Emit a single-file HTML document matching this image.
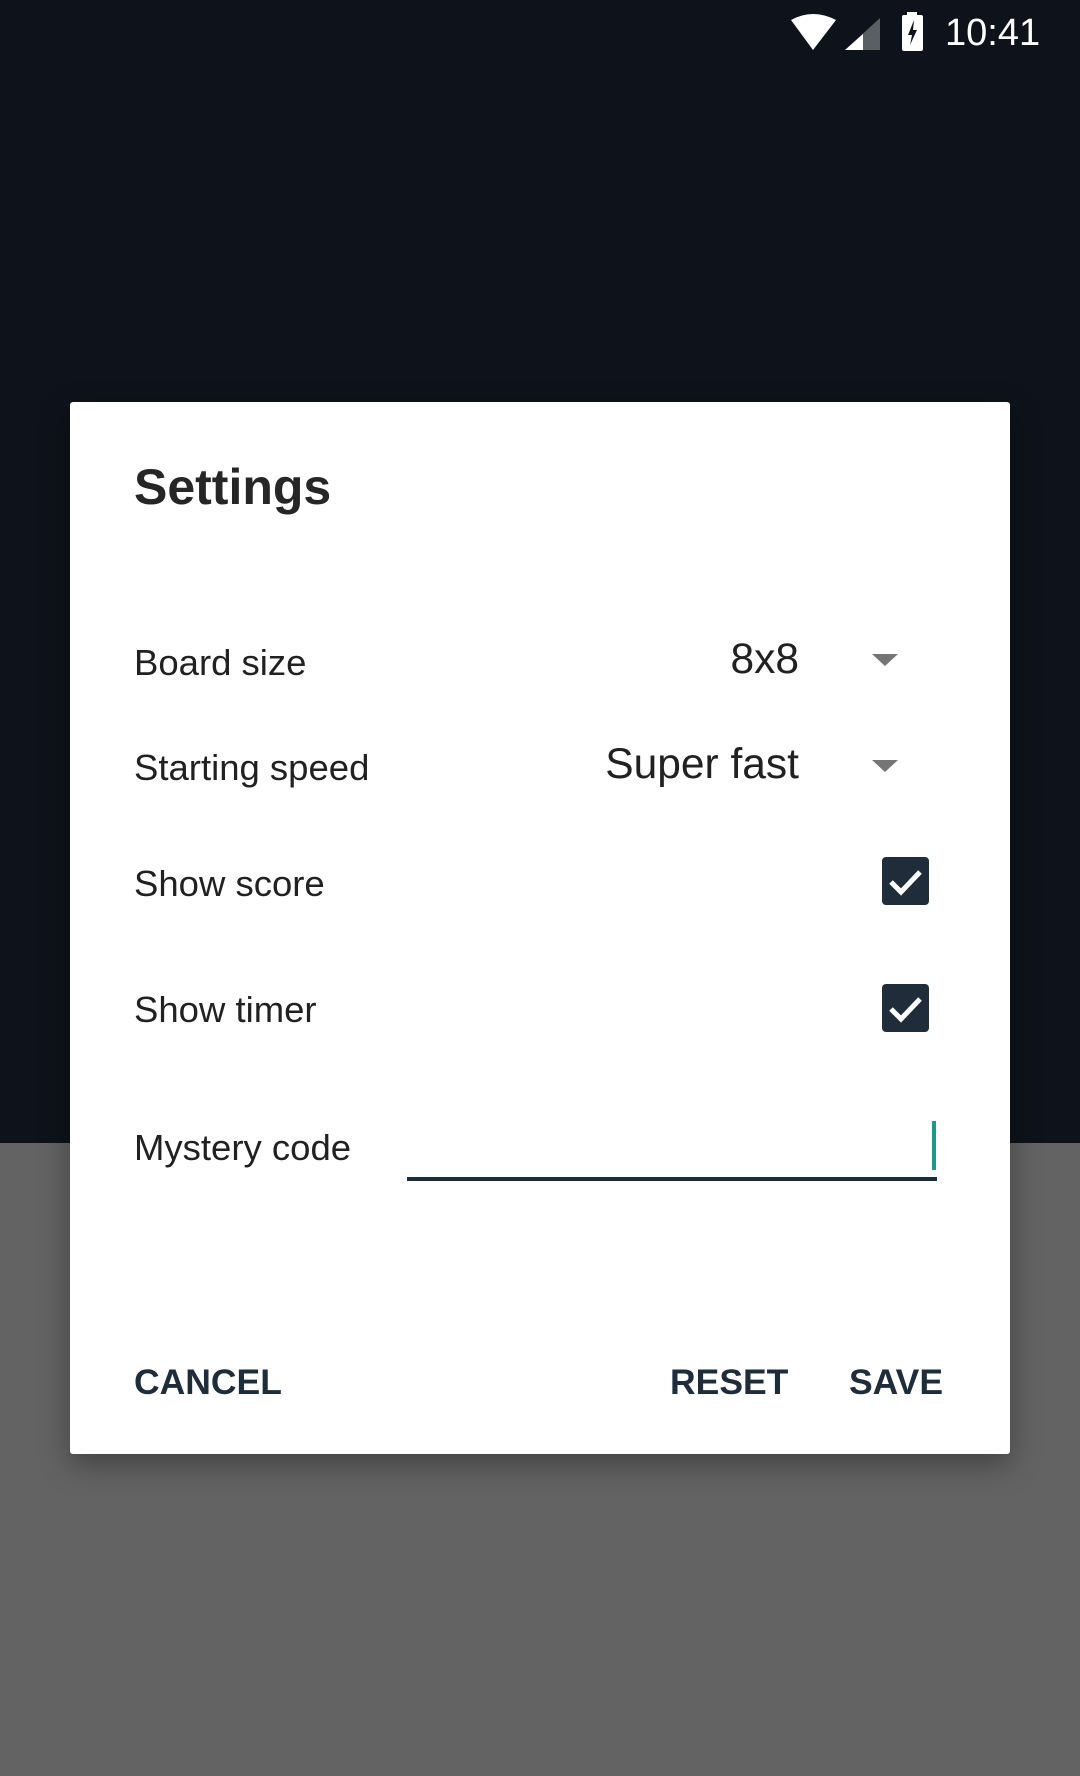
<!DOCTYPE html>
<html><head><style>
*{margin:0;padding:0;box-sizing:border-box}
body{width:1080px;height:1776px;position:relative;overflow:hidden;font-family:"Liberation Sans",sans-serif;background:#636363}
.top{position:absolute;left:0;top:0;width:1080px;height:1143px;background:#0e121a}
.dlg{position:absolute;left:70px;top:402px;width:940px;height:1052px;background:#fff;border-radius:3px;box-shadow:0 10px 30px rgba(0,0,0,.35)}
.t{position:absolute;white-space:nowrap;color:#212121}
.lab{font-size:36.5px}
.val{font-size:42.5px;text-align:right}
.btn{font-size:35.5px;font-weight:bold;color:#1f2d3b}
.arr{position:absolute;width:0;height:0;border-left:13px solid transparent;border-right:13px solid transparent;border-top:12px solid #757575}
.cb{position:absolute;left:882px;width:47px;height:48px;background:#1f2d3b;border-radius:4px}
</style></head><body>
<div class="top"></div>
<svg style="position:absolute;left:790px;top:12px" width="110" height="40">
<path d="M1 8 Q23 -4 46 8 L23 38 Z" fill="#fff"/>
<path d="M90 6 L90 38 L55 38 Z" fill="#5a5f63"/>
<path d="M73 22 L73 38 L55 38 Z" fill="#fff"/>
</svg>
<svg style="position:absolute;left:900px;top:12px" width="26" height="40">
<rect x="7" y="0" width="10" height="4" fill="#fff"/>
<rect x="2" y="3" width="21" height="36" rx="2" fill="#fff"/>
<path d="M14 8 L8 23 L12 23 L10 33 L17 18 L13 18 Z" fill="#0e121a"/>
</svg>
<div class="t" style="left:945px;top:12px;font-size:38px;color:#fff;">10:41</div>
<div class="dlg"></div>
<div class="t" style="left:134px;top:458px;font-size:50px;font-weight:bold;color:#262626">Settings</div>
<div class="t lab" style="left:134px;top:642px">Board size</div>
<div class="t val" style="right:281px;top:636px">8x8</div>
<div class="arr" style="left:872px;top:654px"></div>
<div class="t lab" style="left:134px;top:747px">Starting speed</div>
<div class="t val" style="right:281px;top:741px">Super fast</div>
<div class="arr" style="left:872px;top:760px"></div>
<div class="t lab" style="left:134px;top:863px">Show score</div>
<div class="cb" style="top:857px"><svg width="47" height="48"><path d="M9 25 L19 35 L38 15" stroke="#fff" stroke-width="5" fill="none"/></svg></div>
<div class="t lab" style="left:134px;top:989px">Show timer</div>
<div class="cb" style="top:984px"><svg width="47" height="48"><path d="M9 25 L19 35 L38 15" stroke="#fff" stroke-width="5" fill="none"/></svg></div>
<div class="t lab" style="left:134px;top:1127px">Mystery code</div>
<div style="position:absolute;left:407px;top:1177px;width:530px;height:4px;background:#1f2d3b"></div>
<div style="position:absolute;left:932px;top:1121px;width:4px;height:49px;background:#1a9a8a"></div>
<div class="t btn" style="left:134px;top:1362px">CANCEL</div>
<div class="t btn" style="left:670px;top:1362px">RESET</div>
<div class="t btn" style="left:849px;top:1362px">SAVE</div>
</body></html>
